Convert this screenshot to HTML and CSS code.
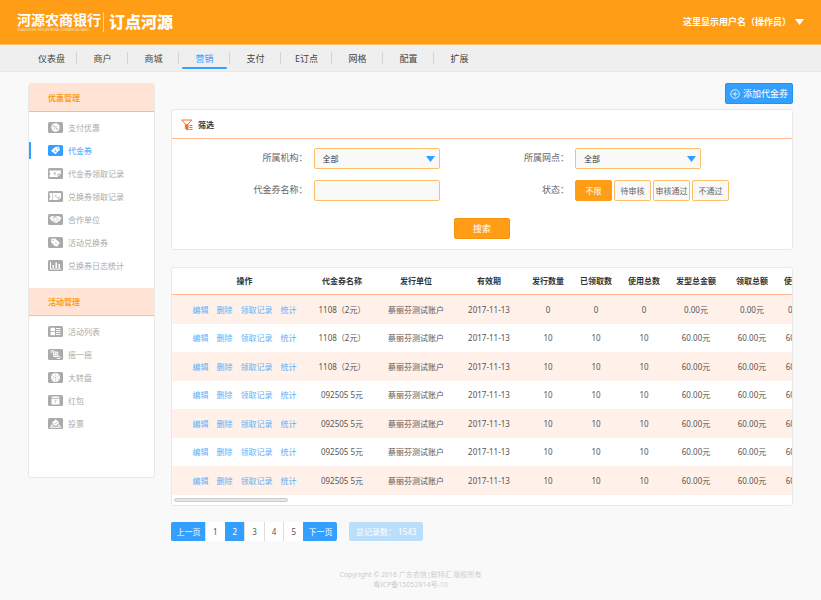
FILE: index.html
```html
<!DOCTYPE html>
<html lang="zh-CN">
<head>
    <meta charset="UTF-8">
    <meta name="viewport" content="width=device-width, initial-scale=1.0">
    <title>代金券</title>
    <link rel="stylesheet" href="styles.css">
</head>
<body>
    <header class="header">
        <div class="logo">
            <div class="logo-bank">
                <span class="bank-name">河源农商银行</span>
                <span class="bank-en">GUANGDONG HEYUAN RURAL COMMERCIAL BANK</span>
            </div>
            <span class="logo-product">订点河源</span>
        </div>
        <button class="user" type="button">这里显示用户名（操作员）<svg width="9" height="6" viewBox="0 0 9 6"><path d="M0 0h9L4.500 6z" fill="#fff"/></svg></button>
    </header>

    <nav class="nav">
        <a href="#">仪表盘</a>
        <a href="#">商户</a>
        <a href="#">商城</a>
        <a href="#" class="active">营销</a>
        <a href="#">支付</a>
        <a href="#">E订点</a>
        <a href="#">网格</a>
        <a href="#">配置</a>
        <a href="#">扩展</a>
    </nav>

    <div class="page">
        <aside class="sidebar">
            <h2>优惠管理</h2>
            <ul>
                <li><a href="#"><svg viewBox="0 0 15 11"><rect width="15" height="11" rx="1.500"/><circle class="w" cx="7.500" cy="5.500" r="4.200"/><path class="g" d="M9.300 3.500l-3.600 4"/><circle class="g" cx="6" cy="4.300" r=".8"/><circle class="g" cx="9" cy="6.700" r=".8"/></svg>支付优惠</a></li>
                <li class="active"><a href="#"><svg viewBox="0 0 15 11"><rect width="15" height="11" rx="1.500"/><path class="w" d="M3 5.800L7.300 2l3.800-.5.700 3.300L7.500 9.300z"/><path class="g" d="M6 5.500l2.300 2M7.300 4.500l1 2.600"/><circle class="g" cx="10" cy="3.200" r=".5"/></svg>代金券</a></li>
                <li><a href="#"><svg viewBox="0 0 15 11"><rect width="15" height="11" rx="1.500"/><path class="w" d="M1.500 2.500H13v3L10 9H1.500V7l1-1.200-1-1.300z"/><path class="g" d="M5.500 3.800L6.800 5.500l1.300-1.700M5.500 5.800H8M6.800 5.500v2M9 7.500l3-3"/><circle class="g" cx="11" cy="7.500" r="1.300"/></svg>代金券领取记录</a></li>
                <li><a href="#"><svg viewBox="0 0 15 11"><rect width="15" height="11" rx="1.500"/><path class="w" d="M1.500 2H13v5l-2 2H1.500V7l1-1.200-1-1.300z"/><path class="g" d="M4.500 2v7M6.500 4l4 3.500M6.500 6l2-2"/><circle class="g" cx="11" cy="7.500" r="1.200"/></svg>兑换券领取记录</a></li>
                <li><a href="#"><svg viewBox="0 0 15 11"><rect width="15" height="11" rx="1.500"/><path class="w" d="M1.500 3.500L4 2l3 .8L10.500 2l3 1.700-1.300 2.500L8 9.300 3.300 6.500z"/><path class="g" d="M4 4.500l3-1.300 4 3M5 7l2-1.800M7 8.200l2-1.800"/></svg>合作单位</a></li>
                <li><a href="#"><svg viewBox="0 0 15 11"><rect width="15" height="11" rx="1.500"/><path class="w" d="M3.300 1.800l3.800-.4 4.700 4.300-2.500 3.800-2.600-.6L3 5z"/><circle class="g" cx="5" cy="3.300" r=".5"/><path class="g" d="M7 5.500l2.500 1.800"/></svg>活动兑换券</a></li>
                <li><a href="#"><svg viewBox="0 0 15 11"><rect width="15" height="11" rx="1.500"/><path class="w" d="M2 2h1v6.500h10v1H2zM4.500 5h1.500v3H4.500zM7.500 2.500H9V8H7.500zM10.500 4H12v4h-1.500z"/></svg>兑换券日志统计</a></li>
            </ul>
            <h2>活动管理</h2>
            <ul>
                <li><a href="#"><svg viewBox="0 0 15 11"><rect width="15" height="11" rx="1.500"/><path class="w" d="M2.500 1.800H7V5H2.500zM2.500 5.800H7v3.400H2.500zM8 2h4.500v1H8zM8 4h4.500v1H8zM8 6h4.500v1H8zM8 8h4.500v1H8z"/></svg>活动列表</a></li>
                <li><a href="#"><svg viewBox="0 0 15 11"><rect width="15" height="11" rx="1.500"/><path class="w" d="M4.500 2.300l5.500.5.800 5.500-5.300-.2z"/><path class="g" d="M6 3.800l3 .3.300 2.700-3-.2z"/><path class="l" d="M3 4.500V1.700h3M9 9.500h3V7"/></svg>摇一摇</a></li>
                <li><a href="#"><svg viewBox="0 0 15 11"><rect width="15" height="11" rx="1.500"/><circle class="w" cx="7.500" cy="5.500" r="4.500"/><path class="g" d="M7.500 1.800v1.700M7.500 7.500v1.700M4.300 3.700l1.500.8M9.200 6.500l1.500.8M4.300 7.300l1.500-.8M9.200 4.500l1.500-.8"/><circle class="g" cx="7.500" cy="5.500" r=".6"/></svg>大转盘</a></li>
                <li><a href="#"><svg viewBox="0 0 15 11"><rect width="15" height="11" rx="1.500"/><path class="w" d="M3.500 1.500h8v1l-4 1-4-1zM3.500 3.500l4 .8 4-.8v6h-8z"/><path class="g" d="M6.500 5l1 1.200 1-1.200M7.500 6.200v2"/></svg>红包</a></li>
                <li><a href="#"><svg viewBox="0 0 15 11"><rect width="15" height="11" rx="1.500"/><path class="w" d="M4 4.800l3.800-3.600L11.300 4.800 8.500 7.600H6zM1.800 8.800h11.400v1H1.800zM2.300 8.300L4 6.300l1.500 2zM12.700 8.300L11 6.300l-1.500 2z"/><path class="g" d="M6 5l1.200 1.200L9 4"/></svg>投票</a></li>
            </ul>
        </aside>

        <main class="main">
            <button class="add" type="button"><svg width="10" height="10" viewBox="0 0 10 10"><circle cx="5" cy="5" r="4.300"/><path d="M5 2.500v5M2.500 5h5"/></svg>添加代金券</button>

            <section class="panel filter">
                <h3><svg width="12" height="12" viewBox="0 0 12 12"><path d="M.7 1h10L7 5.200v6L4.400 9.500V5.200z" fill="none" stroke="#f96b2b"/><path d="M4.400 5.200H7v6L4.400 9.500z" fill="#f96b2b"/><path d="M8.500 6.500h3M8.500 8.500h3M8.500 10.500h3" stroke="#f96b2b"/></svg>筛选</h3>
                <form>
                    <div class="fields">
                        <label for="org">所属机构：</label>
                        <select id="org"><option>全部</option></select>
                        <label for="branch">所属网点：</label>
                        <select id="branch"><option>全部</option></select>
                        <label for="name">代金券名称：</label>
                        <input type="text" id="name">
                        <span class="label" id="status">状态：</span>
                        <div class="radios" role="radiogroup" aria-labelledby="status">
                            <label><input type="radio" name="status" checked><span>不限</span></label>
                            <label><input type="radio" name="status"><span>待审核</span></label>
                            <label><input type="radio" name="status"><span>审核通过</span></label>
                            <label><input type="radio" name="status"><span>不通过</span></label>
                        </div>
                    </div>
                    <button class="search" type="button">搜索</button>
                </form>
            </section>

            <section class="panel list">
                <div class="scroll">
                    <table>
                        <colgroup>
                            <col class="c-op"><col class="c-name"><col class="c-unit"><col class="c-date">
                            <col class="c-num"><col class="c-num"><col class="c-num">
                            <col class="c-money"><col class="c-money"><col class="c-last">
                        </colgroup>
                        <thead>
                            <tr><th>操作</th><th>代金券名称</th><th>发行单位</th><th>有效期</th><th>发行数量</th><th>已领取数</th><th>使用总数</th><th>发型总金额</th><th>领取总额</th><th>使用总额</th></tr>
                        </thead>
                        <tbody>
                            <tr><td><div class="ops"><a href="#">编辑</a><a href="#">删除</a><a href="#">领取记录</a><a href="#">统计</a></div></td><td>1108（2元）</td><td>蔡丽芬测试账户</td><td>2017-11-13</td><td>0</td><td>0</td><td>0</td><td>0.00元</td><td>0.00元</td><td>0.00元</td></tr>
                            <tr><td><div class="ops"><a href="#">编辑</a><a href="#">删除</a><a href="#">领取记录</a><a href="#">统计</a></div></td><td>1108（2元）</td><td>蔡丽芬测试账户</td><td>2017-11-13</td><td>10</td><td>10</td><td>10</td><td>60.00元</td><td>60.00元</td><td>60.00元</td></tr>
                            <tr><td><div class="ops"><a href="#">编辑</a><a href="#">删除</a><a href="#">领取记录</a><a href="#">统计</a></div></td><td>1108（2元）</td><td>蔡丽芬测试账户</td><td>2017-11-13</td><td>10</td><td>10</td><td>10</td><td>60.00元</td><td>60.00元</td><td>60.00元</td></tr>
                            <tr><td><div class="ops"><a href="#">编辑</a><a href="#">删除</a><a href="#">领取记录</a><a href="#">统计</a></div></td><td>092505 5元</td><td>蔡丽芬测试账户</td><td>2017-11-13</td><td>10</td><td>10</td><td>10</td><td>60.00元</td><td>60.00元</td><td>60.00元</td></tr>
                            <tr><td><div class="ops"><a href="#">编辑</a><a href="#">删除</a><a href="#">领取记录</a><a href="#">统计</a></div></td><td>092505 5元</td><td>蔡丽芬测试账户</td><td>2017-11-13</td><td>10</td><td>10</td><td>10</td><td>60.00元</td><td>60.00元</td><td>60.00元</td></tr>
                            <tr><td><div class="ops"><a href="#">编辑</a><a href="#">删除</a><a href="#">领取记录</a><a href="#">统计</a></div></td><td>092505 5元</td><td>蔡丽芬测试账户</td><td>2017-11-13</td><td>10</td><td>10</td><td>10</td><td>60.00元</td><td>60.00元</td><td>60.00元</td></tr>
                            <tr><td><div class="ops"><a href="#">编辑</a><a href="#">删除</a><a href="#">领取记录</a><a href="#">统计</a></div></td><td>092505 5元</td><td>蔡丽芬测试账户</td><td>2017-11-13</td><td>10</td><td>10</td><td>10</td><td>60.00元</td><td>60.00元</td><td>60.00元</td></tr>
                        </tbody>
                    </table>
                </div>
                <div class="thumb"></div>
            </section>

            <div class="pager">
                <div class="pages">
                    <a href="#" class="step">上一页</a>
                    <a href="#">1</a>
                    <a href="#" class="active">2</a>
                    <a href="#">3</a>
                    <a href="#">4</a>
                    <a href="#">5</a>
                    <a href="#" class="step">下一页</a>
                </div>
                <span class="total">总记录数： 1543</span>
            </div>
        </main>
    </div>

    <footer class="footer">
        <p>Copyright © 2016 广东农信|鲜特汇 版权所有</p>
        <p>粤ICP备15052814号-10</p>
    </footer>
</body>
</html>
```
FILE: styles.css
```css
* {
    box-sizing: border-box;
}
body {
    margin: 0;
    background: #f9f9f9;
    color: #555;
    font-family: "Noto Sans", "Noto Sans CJK SC", sans-serif;
    font-size: 8px;
    line-height: 12px;
}
a {
    color: inherit;
    text-decoration: none;
}
button, input, select {
    font-family: inherit;
    margin: 0;
}
h2, h3, ul, p {
    margin: 0;
    padding: 0;
}

/* header */
.header {
    display: flex;
    justify-content: space-between;
    align-items: center;
    height: 45px;
    padding: 0 17px;
    background: #ff9d17;
    border-bottom: 1px solid #ffc266;
    color: #fff;
}
.logo {
    display: flex;
    align-items: center;
}
.logo-bank {
    display: flex;
    flex-direction: column;
    padding-right: 2px;
    border-right: 1px solid #ffd08a;
    white-space: nowrap;
}
.bank-name {
    font-size: 14px;
    font-weight: 700;
    line-height: 16px;
}
.bank-en {
    font-size: 3px;
    line-height: 4px;
    color: #ffe0b3;
}
.logo-product {
    padding-left: 5px;
    font-size: 16px;
    font-weight: 900;
    line-height: 18px;
}
.user {
    display: flex;
    align-items: center;
    gap: 4px;
    padding: 0;
    border: 0;
    background: none;
    color: #fff;
    font-size: 9px;
    font-weight: 700;
    line-height: 14px;
}

/* top navigation */
.nav {
    display: grid;
    grid-template-columns: repeat(9, minmax(51px, 57fr)) 400fr;
    height: 27px;
    padding-left: 26px;
    background: #efefef;
    border-bottom: 1px solid #f3e4da;
}
.nav a {
    display: flex;
    justify-content: center;
    margin-bottom: 1px;
    padding-top: 7px;
    color: #444;
    font-size: 9px;
    line-height: 13px;
    background: linear-gradient(#d4d4d4, #d4d4d4) right 7px / 1px 12px no-repeat;
}
.nav a:last-child {
    background: none;
}
.nav .active {
    position: relative;
    color: #33a0ff;
}
.nav .active::after {
    content: "";
    position: absolute;
    left: 3px;
    right: 3px;
    bottom: 1px;
    height: 2px;
    background: #33a0ff;
    border-radius: 1px;
}

.page {
    display: flex;
    align-items: flex-start;
    gap: 16px;
    padding: 11px 28px 0;
}

/* sidebar */
.sidebar {
    flex: none;
    width: 127px;
    padding-bottom: 31px;
    background: #fff;
    border: 1px solid #e8e8e8;
    border-radius: 3px;
}
.sidebar h2 {
    height: 28px;
    padding: 8px 19px;
    background: #ffe3d5;
    border-bottom: 1px solid #ffb88f;
    color: #ff9d17;
    font-size: 8px;
    line-height: 12px;
}
.sidebar ul {
    padding: 4px 0 11px;
    list-style: none;
}
.sidebar li {
    display: flex;
    align-items: center;
    height: 23px;
    color: #aaa;
}
.sidebar li a {
    display: flex;
    align-items: center;
    gap: 5px;
    width: 100%;
    height: 17px;
    padding-left: 19px;
}
.sidebar li.active a {
    padding-left: 17px;
    border-left: 2px solid #33a0ff;
}
.sidebar .active {
    color: #33a0ff;
}
.sidebar svg {
    width: 15px;
    height: 11px;
    fill: currentColor;
}
.sidebar svg .w {
    fill: #fff;
}
.sidebar svg .g {
    fill: none;
    stroke: currentColor;
    stroke-width: 0.6;
}
.sidebar svg .l {
    fill: none;
    stroke: #fff;
    stroke-width: 0.8;
}

/* content */
.main {
    flex: 1;
    display: flex;
    flex-direction: column;
    min-width: 0;
}
.add {
    display: flex;
    align-items: center;
    align-self: flex-end;
    gap: 3px;
    height: 21px;
    padding: 0 4px;
    border: 1px solid #2492f2;
    border-radius: 2px;
    background: #33a0ff;
    color: #fff;
    font-size: 9px;
    line-height: 13px;
}
.add svg {
    fill: none;
    stroke: #fff;
    stroke-width: 0.8;
}
.panel {
    background: #fff;
    border: 1px solid #e8e8e8;
    border-radius: 3px;
}
.filter {
    margin-top: 5px;
}
.filter h3 {
    display: flex;
    align-items: center;
    gap: 5px;
    height: 29px;
    padding: 2px 9px 0;
    border-bottom: 1px solid #ffb88f;
    color: #333;
    font-size: 8px;
}
.filter form {
    display: flex;
    flex-direction: column;
    align-items: center;
    padding: 9px 0 10px;
}
.fields {
    display: grid;
    grid-template-columns: 1fr 126px 1fr 217px;
    gap: 11px 6px;
    width: 100%;
    padding-left: 12px;
}
.fields > label, .fields .label {
    padding-top: 3px;
    color: #666;
    font-size: 9px;
    line-height: 13px;
    text-align: right;
}
.fields select, .fields > input {
    width: 126px;
    height: 21px;
    padding: 0 8px;
    border: 1px solid #ffbf66;
    border-radius: 2px;
    background: #f9f9f9;
    color: #333;
    font-size: 8px;
}
.fields select {
    appearance: none;
    background: #f9f9f9 url("data:image/svg+xml,%3Csvg xmlns='http://www.w3.org/2000/svg' width='9' height='6'%3E%3Cpath d='M0 0h9L4.500 6z' fill='%2333a0ff'/%3E%3C/svg%3E") right 4px center no-repeat;
}
.radios {
    display: flex;
    gap: 2px;
}
.radios label {
    position: relative;
}
.radios input {
    position: absolute;
    opacity: 0;
}
.radios span {
    display: flex;
    align-items: center;
    justify-content: center;
    width: 37px;
    height: 21px;
    border: 1px solid #ffbf66;
    border-radius: 2px;
    background: #f9f9f9;
    color: #666;
    white-space: nowrap;
}
.radios input:checked + span {
    border-color: #ff9d17;
    background: #ff9d17;
    color: #fff;
}
.search {
    width: 56px;
    height: 21px;
    margin-top: 17px;
    padding: 0;
    border: 1px solid #f5920a;
    border-radius: 2px;
    background: #ff9d17;
    color: #fff;
    font-size: 9px;
}

/* voucher table */
.list {
    margin-top: 17px;
    overflow: hidden;
}
.scroll {
    overflow-x: auto;
    scrollbar-width: none;
}
table {
    width: 100%;
    min-width: 648px;
    table-layout: fixed;
    border-collapse: separate;
    border-spacing: 0;
    text-align: center;
    white-space: nowrap;
}
.c-op { width: 134px; }
.c-name { width: 72px; }
.c-unit { width: 76px; }
.c-date { width: 70px; }
.c-num { width: 48px; }
.c-money { width: 56px; }
.c-last { width: 40px; }
th, td {
    height: 28px;
    padding: 0;
    color: #555;
}
th {
    height: 27px;
    border-bottom: 1px solid #ffb88f;
    color: #333;
}
th:first-child, td:first-child {
    padding-left: 11px;
}
tbody tr:nth-child(odd) td {
    height: 29px;
    background: #fff1ea;
}
.ops {
    display: flex;
    justify-content: center;
    gap: 8px;
    color: #5cb0f7;
}
.thumb {
    width: 114px;
    height: 4px;
    margin: 3px 2px;
    border: 1px solid #ccc;
    border-radius: 2px;
    background: #e8e8e8;
}

/* pagination */
.pager {
    display: flex;
    gap: 12px;
    margin-top: 16px;
    line-height: 19px;
    text-align: center;
}
.pages {
    display: flex;
    width: 166px;
    background: #fff;
    border-radius: 2px;
    overflow: hidden;
}
.pages a {
    flex: 1;
    border-left: 1px solid #ddd;
}
.pages .step {
    flex: none;
    width: 34px;
}
.pages .step, .pages .active {
    border-left-color: #33a0ff;
    background: #33a0ff;
    color: #fff;
}
.total {
    padding: 0 7px;
    border-radius: 2px;
    background: #bbdefb;
    color: #fff;
}

.footer {
    padding: 29px 0 10px;
    color: #ccc;
    font-size: 7px;
    line-height: 10px;
    text-align: center;
}
```
